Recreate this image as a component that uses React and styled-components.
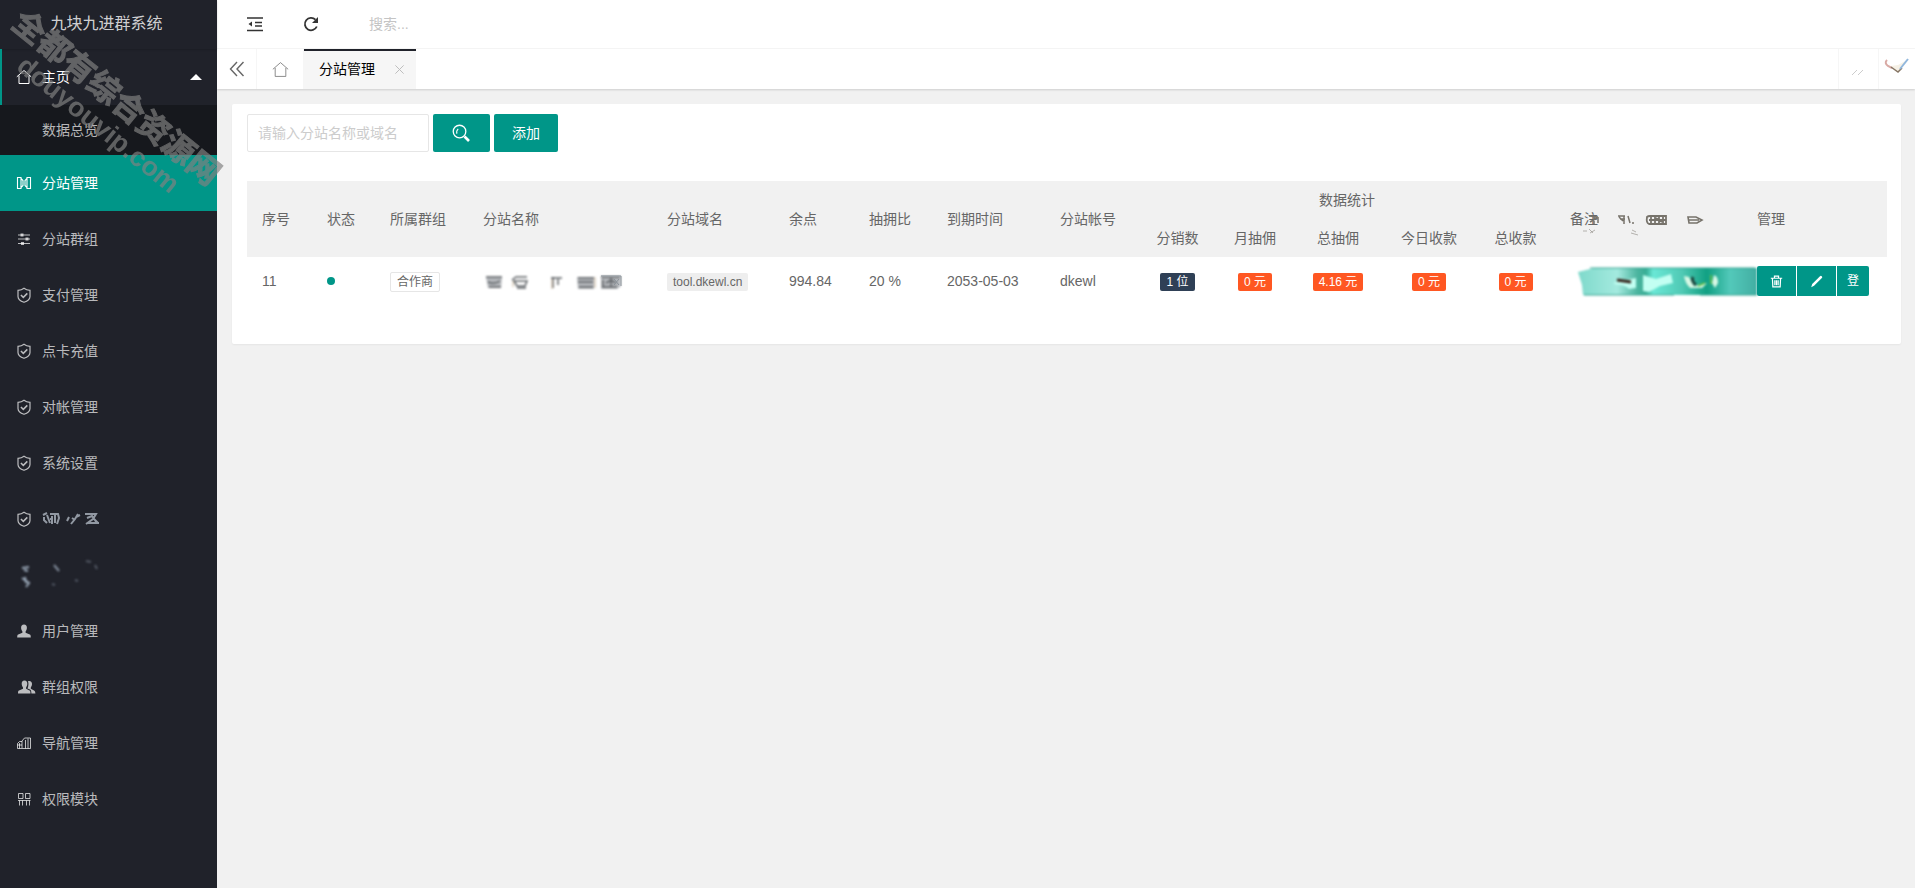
import React from "react";
import styled, { createGlobalStyle, css } from "styled-components";

const GlobalStyle = createGlobalStyle`
  * {
    box-sizing: border-box;
  }

  body {
    margin: 0;
    background: #f1f1f1;
    color: #666;
    font: 14px/24px "Liberation Sans", "Noto Sans CJK SC", sans-serif;
  }

  button, input {
    font: inherit;
  }
`;

const Layout = styled.div`
  display: flex;
  min-height: 100vh;
`;

const Sidebar = styled.aside`
  position: relative;
  flex: 0 0 217px;
  background: #20222a;
`;

const Logo = styled.h1`
  height: 49px;
  margin: 0;
  padding-right: 4px;
  font-size: 16px;
  font-weight: normal;
  line-height: 48px;
  text-align: center;
  color: rgba(255, 255, 255, 0.8);
  box-shadow: 0 1px 2px 0 rgba(0, 0, 0, 0.15);
`;

const Menu = styled.ul`
  list-style: none;
  margin: 0;
  padding: 0;
`;

const MenuLink = styled.a`
  display: flex;
  align-items: center;
  gap: 10px;
  height: 56px;
  padding: 0 15px 0 16px;
  color: rgba(255, 255, 255, 0.7);
  text-decoration: none;

  ${props => props.$open && css`
    color: #fff;
    box-shadow: inset 2px 0 #009688;
  `}

  ${props => props.$active && css`
    color: #fff;
    background: #009688;
  `}
`;

const SubLink = styled.a`
  display: block;
  padding-left: 42px;
  line-height: 50px;
  color: rgba(255, 255, 255, 0.7);
  background: #16181d;
  text-decoration: none;
`;

const Arrow = styled.span`
  margin-left: auto;
  border: 6px solid transparent;
  border-top-width: 0;
  border-bottom-color: #fff;
`;

const Watermark = styled.div`
  position: absolute;
  z-index: 2;
  top: 5px;
  left: 27px;
  transform: rotate(39deg);
  transform-origin: 0 0;
  color: rgb(130, 130, 130);
  opacity: 0.68;
  font-size: 32px;
  font-weight: bold;
  line-height: 32px;
  white-space: nowrap;
  pointer-events: none;
  -webkit-text-stroke: 1px rgb(130, 130, 130);
`;

const WatermarkSite = styled.div`
  padding-left: 31px;
  font-size: 27px;
  -webkit-text-stroke: 0;
`;

const Main = styled.main`
  flex: 1;
  min-width: 0;
`;

const Header = styled.header`
  display: flex;
  align-items: center;
  height: 49px;
  padding: 0 10px;
  background: #fff;
  border-bottom: 1px solid #f6f6f6;
`;

const IconButton = styled.button`
  display: flex;
  align-items: center;
  justify-content: center;
  width: 56px;
  height: 40px;
  padding: 0;
  border: 0;
  background: none;
  color: #333;
`;

const HeaderSearch = styled.input`
  width: 200px;
  margin-left: 30px;
  padding: 0;
  border: 0;
  outline: none;
  background: none;

  &::placeholder {
    color: #c4c4c4;
  }
`;

const Tabs = styled.nav`
  display: flex;
  height: 40px;
  background: #fff;
  box-shadow: 0 1px 2px 0 rgba(0, 0, 0, 0.15);
`;

const TabControl = styled.button`
  display: flex;
  align-items: center;
  justify-content: center;
  width: ${props => props.$width}px;
  padding: 0;
  border: 0 solid #f6f6f6;
  border-${props => props.$side || "right"}-width: 1px;
  background: none;
  color: #666;
`;

const Tab = styled.div`
  display: flex;
  align-items: center;
  gap: 19px;
  padding: 0 11px 0 15px;
  background: #f6f6f6;
  box-shadow: inset 0 2px #20222a;
  color: #000;
`;

const TabClose = styled.button`
  display: flex;
  padding: 0;
  border: 0;
  background: none;
  color: #bbb;
`;

const Spacer = styled.span`
  flex: 1;
`;

const Card = styled.section`
  margin: 15px 14px 15px 15px;
  padding: 10px 14px 39px 15px;
  border-radius: 2px;
  background: #fff;
  box-shadow: 0 1px 2px 0 rgba(0, 0, 0, 0.05);
`;

const Toolbar = styled.form`
  display: flex;
  gap: 4px;
  margin-bottom: 29px;
`;

const SearchInput = styled.input`
  width: 182px;
  height: 38px;
  padding: 0 10px;
  border: 1px solid #e6e6e6;
  border-radius: 2px;
  outline: none;

  &::placeholder {
    color: #ccc;
  }
`;

const Button = styled.button`
  display: flex;
  align-items: center;
  height: 38px;
  padding: 0 18px;
  border: 0;
  border-radius: 2px;
  background: #009688;
  color: #fff;
`;

const Table = styled.table`
  width: 100%;
  table-layout: fixed;
  border-collapse: collapse;
`;

const Th = styled.th`
  height: 38px;
  padding: 0 15px;
  background: #f1f1f1;
  font-weight: normal;
  text-align: ${props => (props.$center ? "center" : "left")};
  white-space: nowrap;
`;

const Td = styled.td`
  height: 48px;
  padding: 0 0 0 ${props => (props.$center ? 0 : 15)}px;
  text-align: ${props => (props.$center ? "center" : "left")};
  white-space: nowrap;
`;

const Dot = styled.span`
  display: block;
  width: 8px;
  height: 8px;
  border-radius: 50%;
  background: #009688;
`;

const Badge = styled.span`
  display: inline-block;
  padding: 0 6px;
  border-radius: 2px;
  background: ${props => props.$color};
  color: ${props => props.$text || "#fff"};
  font-size: 12px;
  line-height: 18px;
  vertical-align: middle;
`;

const OutlineBadge = styled(Badge)`
  border: 1px solid #e6e6e6;
  background: #fff;
  color: #666;
`;

const Actions = styled.div`
  display: flex;
  gap: 1px;
`;

const ActionButton = styled.button`
  display: flex;
  align-items: center;
  justify-content: center;
  height: 30px;
  padding: 0 ${props => (props.$text ? 10 : 13)}px;
  border: 0;
  background: #009688;
  color: #fff;
  font-size: 12px;

  &:first-child {
    border-radius: 2px 0 0 2px;
  }

  &:last-child {
    border-radius: 0 2px 2px 0;
  }
`;

const HeadCell = styled.div`
  display: flex;
  align-items: center;
`;

const Smudge = styled.svg`
  display: block;
  flex: none;
  overflow: visible;
`;

const Svg = ({ size = 16, stroke = 1.2, children }) => (
  <svg width={size} height={size} viewBox="0 0 16 16" fill="none" stroke="currentColor" strokeWidth={stroke} aria-hidden="true">
    {children}
  </svg>
);

const HomeIcon = ({ size, stroke = 1 }) => (
  <Svg size={size} stroke={stroke}>
    <path d="M.8 7.8 8 1.5l7.2 6.3M3 6.5v8h10v-8" />
  </Svg>
);

const ShieldIcon = () => (
  <Svg stroke={1.2}>
    <path d="M8 1.2c1.800 1.400 3.800 2 6 2.200v6c0 3-2.300 4.600-6 5.900-3.700-1.300-6-2.900-6-5.900v-6c2.200-.2 4.200-.8 6-2.200z" />
    <path d="m4.900 8 2.400 2.400 4-4" strokeWidth="1.500" />
  </Svg>
);

const SplitIcon = () => (
  <Svg stroke={1.1}>
    <path d="M1.500 2.500h3.500v11H1.500zM11 2.500h3.500v11H11zM5 3.500l2 2v5l-2 2M11 3.500l-2 2v5l2 2" />
  </Svg>
);

const SlidersIcon = () => (
  <Svg stroke={1.2}>
    <path d="M2 4h12M2 8h12M2 12.500h12" />
    <path d="M4.500 4h3M9.500 8h3M5 12.500h3" strokeWidth="3" />
  </Svg>
);

const UserIcon = () => (
  <Svg>
    <path fill="currentColor" stroke="none" d="M8 1.500c2 0 3 1.500 2.900 3.500-.1 1.600-.7 2.700-1.300 3.500v1.300l4.200 1.600c.7.300 1 .9 1 3.100H1.200c0-2.200.3-2.800 1-3.100l4.200-1.600V8.500C5.800 7.700 5.200 6.600 5.100 5 5 3 6 1.500 8 1.500z" />
  </Svg>
);

const UsersWrap = styled.span`
  display: flex;
  margin-right: -4px;
`;

const UsersIcon = () => (
  <UsersWrap>
    <svg width="20" height="16" viewBox="0 0 20 16" fill="currentColor" aria-hidden="true">
      <path d="M8.500 1.500c2 0 2.900 1.500 2.800 3.500-.1 1.600-.7 2.700-1.200 3.500v1.300l3.400 1.600c.7.300 1 .9 1 3.100H2c0-2.200.3-2.800 1-3.100l4-1.600V8.500C6.400 7.700 5.800 6.600 5.700 5c-.1-2 .8-3.500 2.800-3.500z" />
      <path d="M12 2.300c2.500-.8 4.200.8 4 3-.1 1.500-.6 2.400-1.200 3.200v1.200l3.200 1.700c.9.500 1.300 1.200 1.400 3.100h-4c0-2.200-.4-3.400-1.400-4L11.500 9.500C12.500 7.300 12.800 4.500 12 2.300z" />
    </svg>
  </UsersWrap>
);

const NavIcon = () => (
  <Svg stroke={1}>
    <path d="M6 13V6l2.500-3H14.500v10.500H1.500V8.500l2-2H6M12 3.500v10M9.500 5v8.500M1.500 10H6M3.500 8v5.500" />
  </Svg>
);

const ModuleIcon = () => (
  <Svg stroke={1}>
    <path d="M2.500 2.500h4.500v5H2.500zM9.500 2.500H14v5H9.500zM2 9.500h12.500M3.500 9.500v5M6.500 9.500v5M10.500 9.500v5M13.500 9.500v5" />
  </Svg>
);

const HiddenLabel = () => (
  <Smudge width="60" height="16" viewBox="0 0 60 16" fill="none" aria-hidden="true">
    <g stroke="#aeb6c0" strokeWidth="2" opacity=".8" style={{ filter: "blur(0.6px)" }}>
      <path d="M1 4l4-2M2 6v3l3 3M5 4l3 8M8 3h8l1 4-2 6M10 5v8M13 4v8M8 8h3" />
      <path d="M27 6l-2 4M36 3l-3 5-4 5M30 7l3 2M38 4l-4 2" />
      <path d="M43 3h11l-3 5-7 5M45 7l5-2 5 7M46 12h11M52 8l4 4" />
    </g>
  </Smudge>
);

const HiddenItem = () => (
  <Smudge width="90" height="30" viewBox="0 0 90 30" fill="none" aria-hidden="true">
    <g stroke="#9aa8b8" strokeWidth="2" style={{ filter: "blur(1px)" }}>
      <path d="M6 8l7-1M8 10l4 1M6 18l7 5-3 4M9 17l1 6" />
      <path d="M38 5l5 6" opacity=".8" />
      <path d="M70 1l5 1M79 5l2 4M59 20l3 1M36 24l3 1" opacity=".4" />
    </g>
  </Smudge>
);

const HiddenName = () => (
  <Smudge width="140" height="18" viewBox="0 0 140 18" fill="none" aria-hidden="true">
    <g style={{ filter: "blur(0.8px)" }}>
      <path d="M3 5h16l-1 11H5zM94 5h17v12H95zM118 4h20v10l-4 3h-16z" fill="#8d9298" opacity=".65" />
      <path d="M3 5h16M5 10q6 3 12-1M6 15h12M29 8l4-3h11M31 9h13l-2 5h-8zM34 16h9M68 6h11M70 5v11M75 7v6M95 6h16M95 10h15M96 15h14M118 5h19M120 8v7M123 11l5-3 5 3M119 15h15M128 6v9" stroke="#5d6165" strokeWidth="1.500" />
      <path d="M30 9v6M69 7v10M112 5v11" stroke="#c7b397" />
    </g>
    <path d="M118 4h20v10M131 7l5 6M136 7l-5 6" stroke="#8b939a" />
  </Smudge>
);

const HiddenHeading = () => (
  <Smudge width="110" height="16" viewBox="0 0 110 16" fill="none" aria-hidden="true">
    <g stroke="#77736b" style={{ filter: "blur(0.7px)" }}>
      <path d="M-9 5l9 1M-8 11l7-4M-4 5v8M0 6v6" strokeWidth="1.500" />
      <path d="M20 5h7M22 8h5M26 5v8M30 5l2 7M34 12h2M21 6l4 4" strokeWidth="1.500" />
      <path d="M49 6q1-1 3-1h16v8H51q-3-1-2-7zM53 6v6M57 5v8M61 6v6M65 5v8M51 9h17M58 7l6 4" strokeWidth="1.800" />
      <path d="M90 6h8l6 3-5 3h-8zM91 9h10" strokeWidth="1.600" />
      <path d="M-15 20h4M-9 18l4 4M-8 22l5-3M33 22l7 2M34 19l4 2" opacity=".5" />
    </g>
  </Smudge>
);

const HiddenRemark = () => (
  <Smudge width="187" height="30" viewBox="0 0 187 30" aria-hidden="true">
    <defs>
      <linearGradient id="remark" x2="1" y2="0">
        <stop offset="0" stopColor="#7fd9cb" />
        <stop offset=".22" stopColor="#a4eadf" />
        <stop offset=".33" stopColor="#4db5a0" />
        <stop offset=".38" stopColor="#37ad95" />
        <stop offset=".42" stopColor="#6ae8d6" />
        <stop offset=".58" stopColor="#50cab5" />
        <stop offset=".72" stopColor="#11a083" />
        <stop offset=".85" stopColor="#53c9ba" />
        <stop offset="1" stopColor="#42aea2" />
      </linearGradient>
    </defs>
    <g style={{ filter: "blur(1px)" }}>
      <path d="M8 6l16-4h163v27H13l-1-10z" fill="url(#remark)" />
      <path d="M20 2h165M14 29h90M130 29h57" stroke="#249b87" strokeWidth="1.500" opacity=".6" />
      <path d="M44 17q7-4 12-3l10-2v10l-7 1q-3-4-15-5zM73 9l13 4 15-5 2 9-13 3-11 6-6-1z" fill="#c2fff2" />
      <path d="M114 10l5 1 5 9 13-3-5 5h-12q-5-5-6-12zM144 9q4 1 4 8l-3 5-3-5z" fill="#d7f8e5" />
      <path d="M47 14l14 2" stroke="#38241c" strokeWidth="3" />
      <path d="M123 11q-2 4 3 8" stroke="#1d453d" strokeWidth="3" fill="none" />
      <path d="M128 20l7-3M141 9v9" stroke="#65bf3f" strokeWidth="1.500" />
    </g>
  </Smudge>
);

const menuItems = [
  { label: "分站管理", icon: SplitIcon, active: true },
  { label: "分站群组", icon: SlidersIcon },
  { label: "支付管理", icon: ShieldIcon },
  { label: "点卡充值", icon: ShieldIcon },
  { label: "对帐管理", icon: ShieldIcon },
  { label: "系统设置", icon: ShieldIcon },
  { key: "hidden-label", label: <HiddenLabel />, icon: ShieldIcon },
  { key: "hidden-item", icon: HiddenItem },
  { label: "用户管理", icon: UserIcon },
  { label: "群组权限", icon: UsersIcon },
  { label: "导航管理", icon: NavIcon },
  { label: "权限模块", icon: ModuleIcon },
];

const columnWidths = [65, 63, 93, 184, 122, 80, 78, 113, 94, 77, 78, 88, 94, 79, 187, 145];
const columns = ["序号", "状态", "所属群组", "分站名称", "分站域名", "余点", "抽拥比", "到期时间", "分站帐号"];
const statColumns = ["分销数", "月抽佣", "总抽佣", "今日收款", "总收款"];

const SiteTable = () => (
  <Table>
    <colgroup>
      {columnWidths.map((width, i) => <col key={i} style={{ width }} />)}
    </colgroup>
    <thead>
      <tr>
        {columns.map(name => <Th key={name} rowSpan={2}>{name}</Th>)}
        <Th colSpan={5} $center>数据统计</Th>
        <Th rowSpan={2}><HeadCell>备注<HiddenHeading /></HeadCell></Th>
        <Th rowSpan={2}>管理</Th>
      </tr>
      <tr>
        {statColumns.map(name => <Th key={name} $center>{name}</Th>)}
      </tr>
    </thead>
    <tbody>
      <tr>
        <Td>11</Td>
        <Td><Dot /></Td>
        <Td><OutlineBadge>合作商</OutlineBadge></Td>
        <Td><HiddenName /></Td>
        <Td><Badge $color="#eee" $text="#666">tool.dkewl.cn</Badge></Td>
        <Td>994.84</Td>
        <Td>20 %</Td>
        <Td>2053-05-03</Td>
        <Td>dkewl</Td>
        <Td $center><Badge $color="#2f4056">1 位</Badge></Td>
        <Td $center><Badge $color="#ff5722">0 元</Badge></Td>
        <Td $center><Badge $color="#ff5722">4.16 元</Badge></Td>
        <Td $center><Badge $color="#ff5722">0 元</Badge></Td>
        <Td $center><Badge $color="#ff5722">0 元</Badge></Td>
        <Td><HiddenRemark /></Td>
        <Td>
          <Actions>
            <ActionButton type="button" aria-label="删除">
              <Svg size={13} stroke={1.5}>
                <path d="M1 4h14M5.500 3.500V1.500h5v2M3 4.500l.5 10h9l.5-10M6 6.500v6M8 6.500v6M10 6.500v6" />
              </Svg>
            </ActionButton>
            <ActionButton type="button" aria-label="编辑">
              <Svg size={13}>
                <path fill="currentColor" stroke="none" d="M12.300 1.500q1-1 2.200.1t.1 2.200L5 13.300 1.500 15l1.200-4z" />
              </Svg>
            </ActionButton>
            <ActionButton type="button" $text>登</ActionButton>
          </Actions>
        </Td>
      </tr>
    </tbody>
  </Table>
);

export default function App() {
  return (
    <Layout>
      <GlobalStyle />
      <Sidebar>
        <Logo>九块九进群系统</Logo>
        <Menu>
          <li>
            <MenuLink href="#" $open><HomeIcon />主页<Arrow /></MenuLink>
            <SubLink href="#">数据总览</SubLink>
          </li>
          {menuItems.map(({ key, label, icon: Icon, active }) => (
            <li key={key || label}>
              <MenuLink href="#" $active={active}><Icon />{label}</MenuLink>
            </li>
          ))}
        </Menu>
        <Watermark>
          全都有综合资源网
          <WatermarkSite>douyouvip.com</WatermarkSite>
        </Watermark>
      </Sidebar>

      <Main>
        <Header>
          <IconButton type="button" aria-label="侧边伸缩">
            <Svg stroke={1.4}>
              <path d="M0 2h16M8 6.500h7M8 10h7M0 14.500h16" />
              <path d="M5 5.500v5L1.500 8z" fill="currentColor" stroke="none" />
            </Svg>
          </IconButton>
          <IconButton type="button" aria-label="刷新">
            <Svg stroke={1.8}>
              <path d="M13.800 10.500a6.200 6.200 0 1 1-1.300-6.800" />
              <path d="M15 1v6H9z" fill="currentColor" stroke="none" />
            </Svg>
          </IconButton>
          <HeaderSearch type="text" placeholder="搜索..." aria-label="搜索" />
        </Header>

        <Tabs>
          <TabControl type="button" $width={40} aria-label="向左">
            <Svg stroke={1.4}><path d="M8 1 1.500 8 8 15M14.500 1 8 8l6.500 7" /></Svg>
          </TabControl>
          <TabControl type="button" $width={47} aria-label="主页"><HomeIcon size={17} stroke={0.7} /></TabControl>
          <Tab>
            分站管理
            <TabClose type="button" aria-label="关闭">
              <Svg size={11} stroke={1.4}><path d="m2 2 12 12M14 2 2 14" /></Svg>
            </TabClose>
          </Tab>
          <Spacer />
          <TabControl type="button" $width={40} $side="left" aria-label="向右">
            <Smudge width="16" height="16" viewBox="0 0 16 16" stroke="#ccc" aria-hidden="true">
              <path d="m1 14 5-5M7 14l5-5" style={{ filter: "blur(0.4px)" }} />
            </Smudge>
          </TabControl>
          <TabControl type="button" $width={37} $side="left" aria-label="更多">
            <Smudge width="26" height="20" viewBox="0 0 26 20" fill="none" aria-hidden="true">
              <g style={{ filter: "blur(0.7px)" }}>
                <path d="M3 1q-3 3 1 6l4 2" stroke="#d9aaa5" strokeWidth="2" />
                <path d="m7 7 7 6 9-12-9 5z" fill="#f6f1e6" />
                <path d="m7 8 7 5 4-4" stroke="#857463" strokeWidth="1.500" />
                <path d="m16 10 8-10" stroke="#91b7dc" strokeWidth="2" />
              </g>
            </Smudge>
          </TabControl>
        </Tabs>

        <Card>
          <Toolbar onSubmit={e => e.preventDefault()}>
            <SearchInput type="text" placeholder="请输入分站名称或域名" aria-label="分站名称或域名" />
            <Button type="submit" aria-label="搜索">
              <Svg size={21} stroke={1}>
                <circle cx="6.500" cy="6.500" r="4.800" />
                <path d="M4.500 8.200Q3.800 6 5.500 4.500" strokeWidth=".8" />
                <path d="m10.300 10.300 3.400 3.400" strokeWidth="2" />
              </Svg>
            </Button>
            <Button type="button">添加</Button>
          </Toolbar>
          <SiteTable />
        </Card>
      </Main>
    </Layout>
  );
}
